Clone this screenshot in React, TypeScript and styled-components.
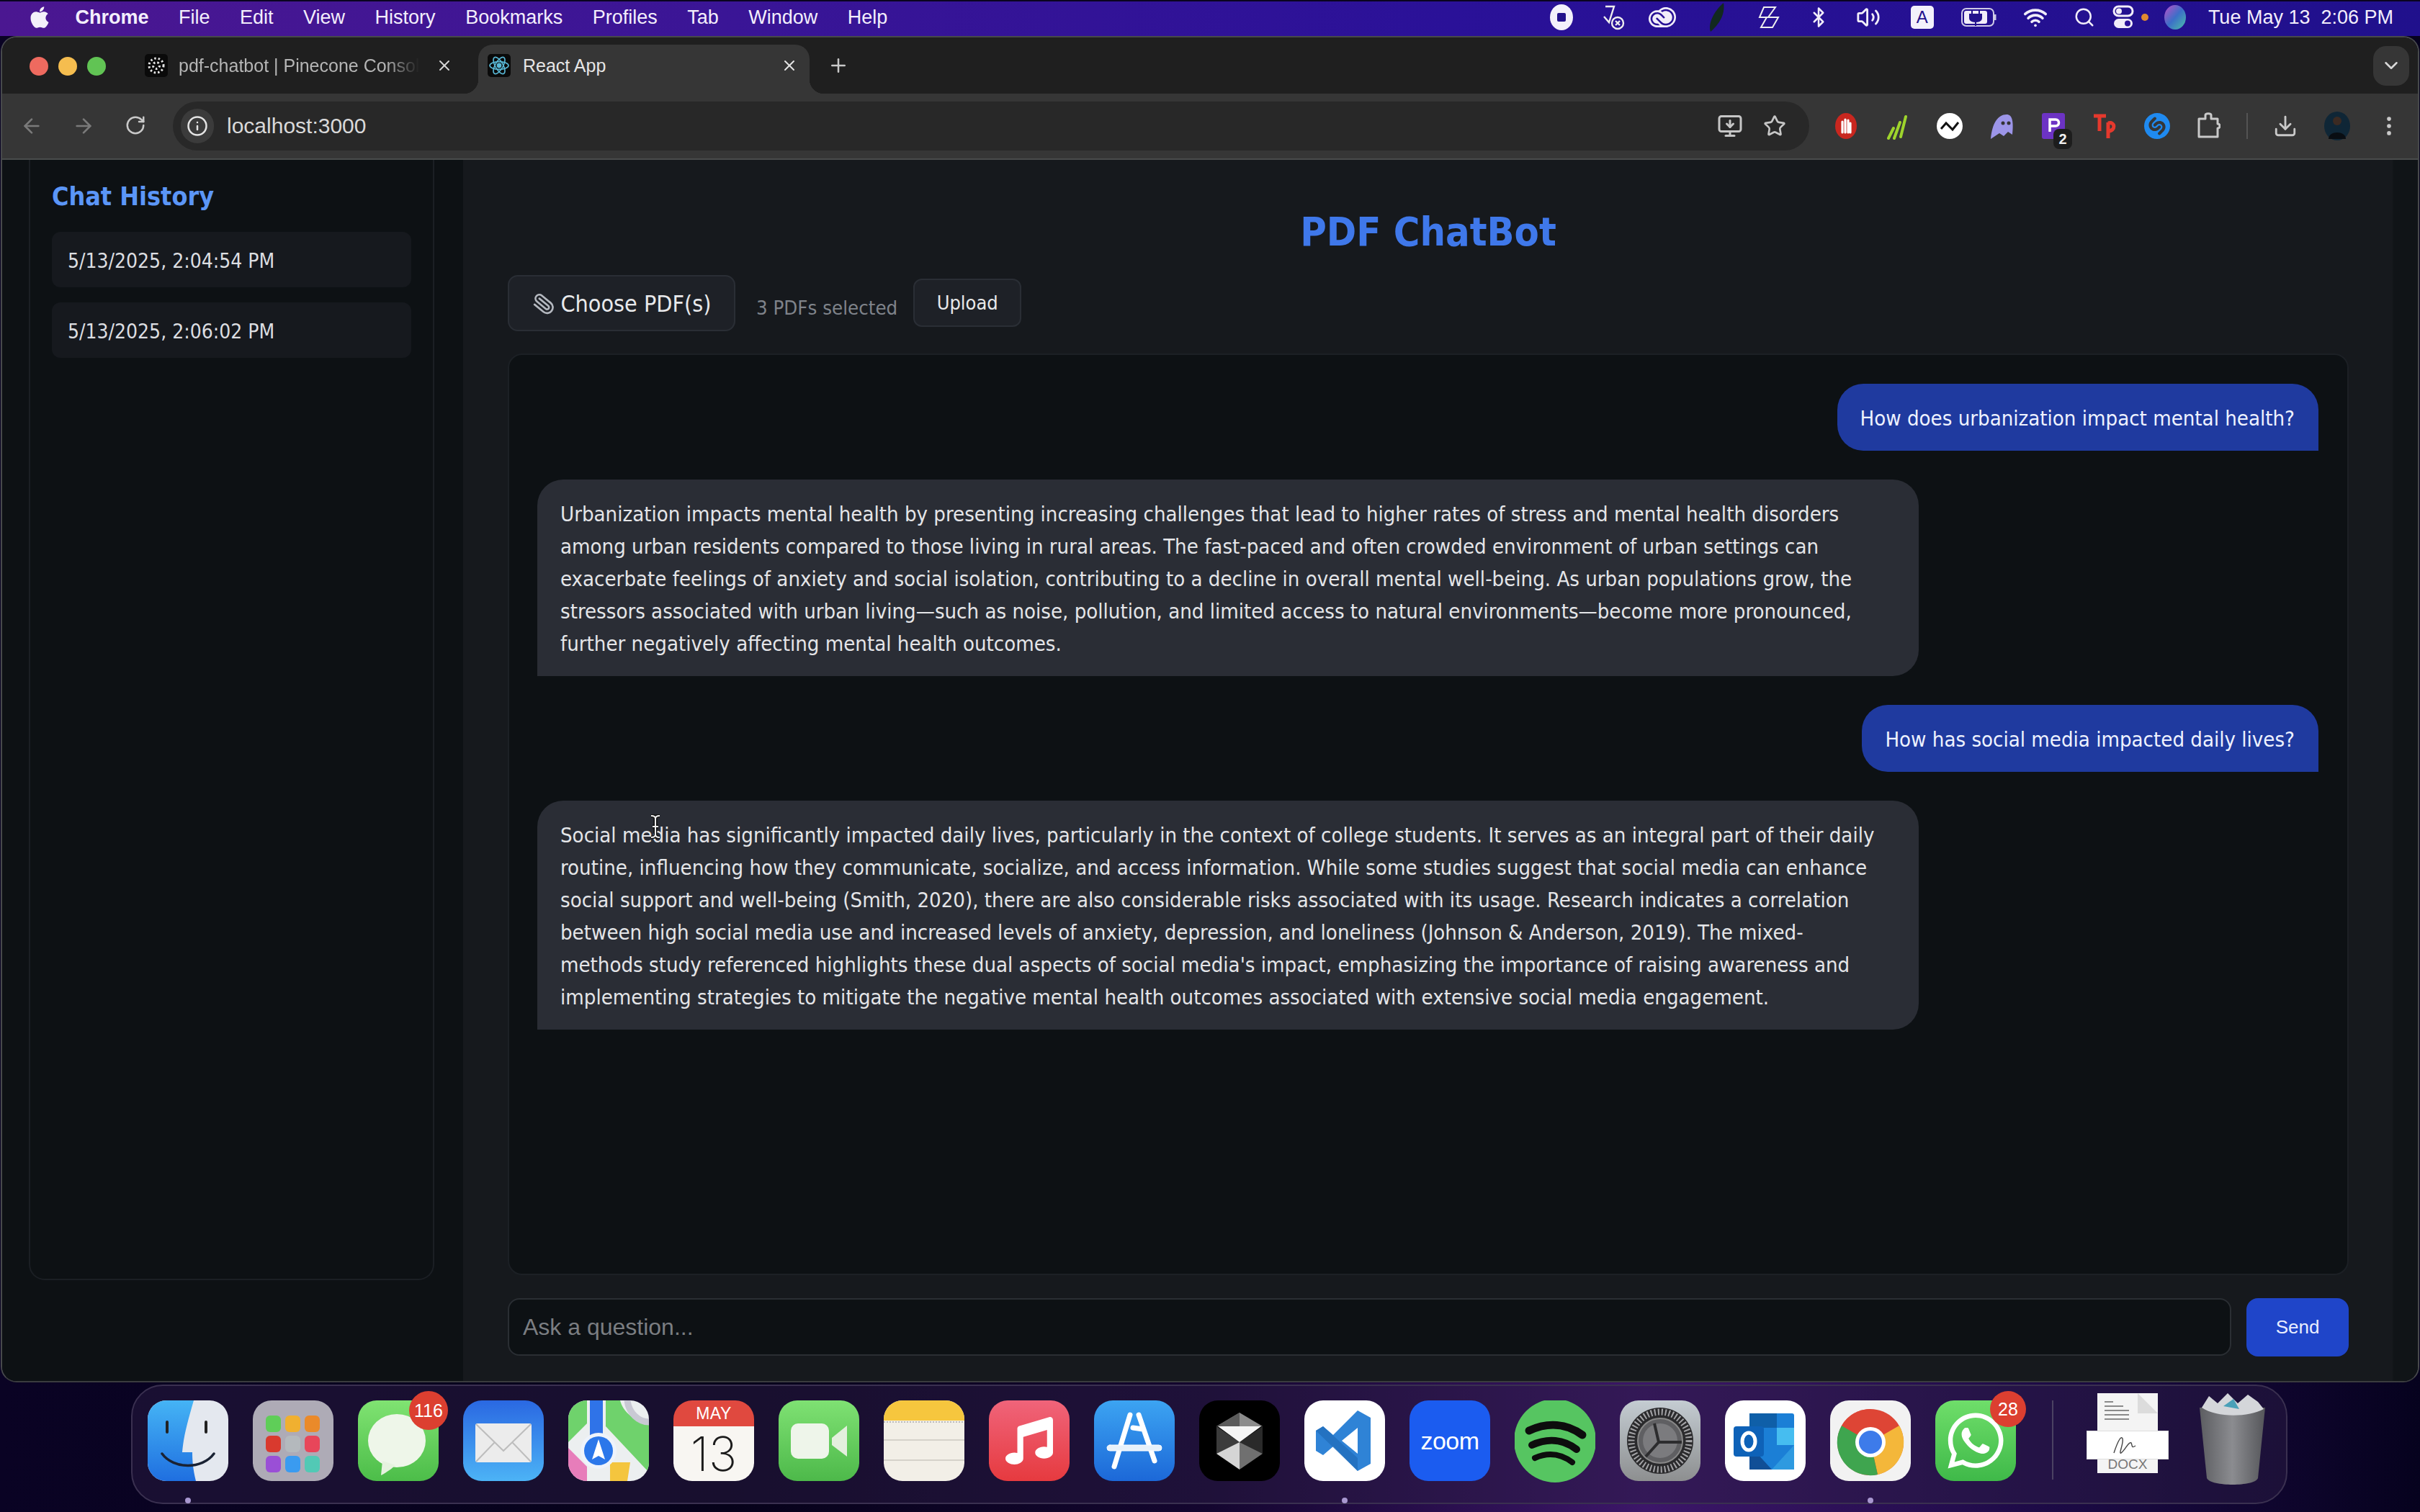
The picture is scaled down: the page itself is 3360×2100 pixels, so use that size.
import React from "react";
import styled, { createGlobalStyle } from "styled-components";
import {
  ArrowLeft, ArrowRight, RotateCw, Info, Star, Download, EllipsisVertical, ChevronDown, X, Plus,
  MonitorDown, Search, Wifi, Bluetooth, Volume2, Paperclip,
} from "lucide-react";
import { FaApple, FaMusic, FaWhatsapp } from "react-icons/fa";
import { SiShazam, SiAdobecreativecloud } from "react-icons/si";

const SANS = `"Liberation Sans", Arial, sans-serif`;
const UI = `"DejaVu Sans", "Liberation Sans", sans-serif`;

const Global = createGlobalStyle`
  html, body { margin: 0; padding: 0; width: 3360px; height: 2100px; overflow: hidden; background: #07021a; }
  #root { width: 3360px; height: 2100px; }
  * { box-sizing: border-box; }
`;

const Desktop = styled.div`
  width: 3360px; height: 2100px; display: flex; flex-direction: column; font-family: ${SANS};
  background: linear-gradient(90deg, #0a0324 0%, #06021a 30%, #14062f 50%, #3c1668 68%, #1c0a45 85%, #06021e 100%);
`;

/* ---------- Menu bar ---------- */
const MenuBar = styled.div`
  height: 50px; flex: none; display: flex; align-items: center; padding: 0 0 4px 40px; color: #f3eefc;
  font-size: 27px; border-top: 2px solid #0a0420;
  background: linear-gradient(90deg, #4b1791 0%, #3a1596 30%, #2a1198 60%, #20108c 100%);
`;
const Menus = styled.div` display: flex; align-items: center; gap: 41.5px; `;
const AppleMark = styled(FaApple)` width: 30px; height: 34px; margin-right: -7px; color: #f4f0fa; `;
const MenuName = styled.span<{ $bold?: boolean }>`
  font-weight: ${(p) => (p.$bold ? 700 : 400)}; white-space: nowrap;
`;
const StatusArea = styled.div`
  margin-left: auto; display: flex; align-items: center; height: 100%; gap: 0; padding-right: 37px;
`;
const StatusSlot = styled.div<{ $w: number; $pull?: number }>`
  width: ${(p) => p.$w}px; flex: none; display: flex; align-items: center; justify-content: center; color: #f1edf9;
  margin-left: ${(p) => p.$pull ?? 0}px;
`;
const ClockText = styled.span` margin-left: 10px; white-space: nowrap; `;
const InputMode = styled.div`
  width: 32px; height: 32px; background: #f3f1fb; color: #23128c; border-radius: 5px; display: flex;
  align-items: center; justify-content: center; font-size: 24px; font-weight: 400;
`;

/* ---------- Browser window ---------- */
const Window = styled.div`
  width: 3358px; height: 1870px; margin-left: 1px; flex: none; display: flex; flex-direction: column;
  border-radius: 22px; overflow: hidden; border: 2px solid #47494b; border-bottom-color: #3a3c3e;
`;
const TabStrip = styled.div`
  height: 78px; flex: none; background: #1f1f1f; display: flex; align-items: flex-end; padding-left: 38px;
`;
const Lights = styled.div` display: flex; gap: 14px; align-self: center; margin-right: 40px; margin-top: 2px; `;
const Light = styled.span<{ $c: string }>`
  width: 26px; height: 26px; border-radius: 50%; background: ${(p) => p.$c};
`;
const Tab = styled.div<{ $active?: boolean }>`
  position: relative; height: 68px; display: flex; align-items: center; width: ${(p) => (p.$active ? 460 : 464)}px;
  margin-right: ${(p) => (p.$active ? 0 : 13)}px; padding: 0 ${(p) => (p.$active ? 16 : 22)}px 10px ${(p) => (p.$active ? 13 : 14)}px; flex: none;
  border-radius: 20px 20px 0 0; background: ${(p) => (p.$active ? "#363636" : "transparent")};
  color: ${(p) => (p.$active ? "#e6e6e6" : "#b5b5b5")}; font-size: 25px;
  ${(p) => p.$active && `
    &::before, &::after { content: ""; position: absolute; bottom: 0; width: 20px; height: 20px; }
    &::before { left: -20px; background: radial-gradient(circle at 0 0, #1f1f1f 20px, #363636 20.5px); }
    &::after { right: -20px; background: radial-gradient(circle at 100% 0, #1f1f1f 20px, #363636 20.5px); }
  `}
`;
const Favicon = styled.div<{ $gap: number }>`
  width: 32px; height: 32px; flex: none; background: #0a0a0a; border-radius: 5px; display: flex;
  align-items: center; justify-content: center; margin-right: ${(p) => p.$gap}px;
`;
const TabTitle = styled.span<{ $fade?: boolean }>`
  flex: 1; min-width: 0; white-space: nowrap; overflow: hidden;
  ${(p) => p.$fade && `margin-right: 23px; mask-image: linear-gradient(90deg, #000 86%, transparent 100%);`}
`;
const NewTab = styled.div`
  align-self: center; margin-left: 22px; width: 36px; display: flex; justify-content: center; color: #c8c8c8;
`;
const TabMenu = styled.div`
  margin-left: auto; margin-right: 12px; align-self: center; width: 50px; height: 55px; border-radius: 18px;
  background: #363636; color: #d8d8d8; display: flex; align-items: center; justify-content: center;
`;
const Toolbar = styled.div`
  height: 92px; flex: none; background: #363636; display: flex; align-items: center; padding-left: 23px;
  border-bottom: 2px solid #4a4c4c;
`;
const NavGroup = styled.div` display: flex; gap: 36px; margin-right: 34px; `;
const NavButton = styled.div<{ $dim?: boolean }>`
  width: 36px; display: flex; justify-content: center; color: ${(p) => (p.$dim ? "#7a7a7a" : "#c9c9c9")};
`;
const UrlPill = styled.div`
  width: 2272px; height: 68px; flex: none; border-radius: 34px; background: #282828; display: flex;
  align-items: center; padding: 0 32px 0 11px;
`;
const InfoChip = styled.div`
  width: 46px; height: 48px; border-radius: 24px; background: #3b3b3b; color: #e4e4e4; display: flex;
  align-items: center; justify-content: center;
`;
const UrlText = styled.span` margin-left: 18px; color: #d9d9d9; font-size: 30px; flex: 1; `;
const PillActions = styled.div` display: flex; gap: 28px; color: #c6c6c6; align-items: center; `;
const ExtList = styled.div` display: flex; align-items: center; gap: 36px; margin-left: 33px; `;
const Ext = styled.div`
  position: relative; width: 36px; height: 40px; display: flex; align-items: center; justify-content: center;
  color: #c9c9c9;
`;
const ExtBadge = styled.span`
  position: absolute; right: -8px; bottom: -12px; width: 26px; height: 28px; border-radius: 8px; background: #1d1d1d;
  color: #f0f0f0; font-size: 20px; font-weight: 700; display: flex; align-items: center; justify-content: center;
`;
const ToolDivider = styled.span` width: 2px; height: 36px; background: #545454; margin: 0 -2px; flex: none; `;

/* ---------- Page ---------- */
const Page = styled.div` flex: 1; min-height: 0; display: flex; position: relative; font-family: ${UI}; font-stretch: condensed; `;
const Sidebar = styled.aside`
  width: 640px; flex: none; background: #0d1114; padding: 0 40px 0 37px; display: flex; flex-direction: column;
`;
const SidebarPanel = styled.div`
  height: 1556px; border: 2px solid #1b1f24; border-top: none; border-radius: 0 0 22px 22px; padding: 24px 30px 0;
  display: flex; flex-direction: column;
`;
const SideTitle = styled.h2`
  margin: 0 0 27px; font-size: 35.6px; line-height: 54px; font-weight: 700; color: #5b96f7; height: 49px;
`;
const HistoryItem = styled.div`
  height: 77px; border-radius: 12px; background: #16191e; color: #dcdee1; font-size: 28px; padding: 3px 22px 0;
  display: flex; align-items: center; margin-bottom: 21px;
`;
const Main = styled.main`
  flex: 1; background: #16191d; display: flex; flex-direction: column; padding: 0 60px 0 62px; min-width: 0;
`;
const Title = styled.h1`
  margin: 0; height: 160px; flex: none; text-align: center; font-size: 55.5px; line-height: 96px; font-weight: 700;
  color: #3f78ea; padding-top: 52px;
`;
const UploadRow = styled.div` height: 78px; flex: none; display: flex; align-items: center; `;
const ChooseButton = styled.label`
  width: 316px; height: 78px; flex: none; border: 2px solid #2a2e35; border-radius: 14px; background: #1e2127;
  display: flex; align-items: center; justify-content: center; gap: 8px; font-size: 32px; color: #e8e9eb; padding-top: 2px;
`;
const ClipIcon = styled(Paperclip)` color: #b4b8bf; transform: scaleX(-1) rotate(6deg); `;
const SelectedText = styled.span`
  margin: 12px 22px 0 29px; color: #7f838a; font-size: 27.4px; white-space: nowrap;
`;
const UploadButton = styled.button`
  width: 150px; height: 67px; flex: none; border: 2px solid #2a2e35; border-radius: 12px; background: #1e2127;
  color: #e8e9eb; font: inherit; font-stretch: condensed; font-size: 27px; margin-top: -1px;
`;
const ChatBox = styled.section`
  flex: 1; min-height: 0; margin-top: 31px; background: #0d1114; border: 2px solid #1c2025; border-radius: 20px;
  padding: 40px 40px 39px 39px; display: flex; flex-direction: column; gap: 40px;
`;
const Bubble = styled.div<{ $user?: boolean }>`
  flex: none; font-size: 29.1px; line-height: 45px; padding: ${(p) => (p.$user ? "26px 33px 22px 32px" : "26px 32px 22px")};
  align-self: ${(p) => (p.$user ? "flex-end" : "flex-start")}; width: ${(p) => (p.$user ? "auto" : "1918px")};
  border-radius: ${(p) => (p.$user ? "36px 36px 0 36px" : "36px 36px 36px 0")};
  background: ${(p) => (p.$user ? "#1f3a9f" : "#2a2d35")}; color: ${(p) => (p.$user ? "#eef2ff" : "#e4e5e8")};
`;
const Line = styled.div` white-space: nowrap; `;
const InputRow = styled.form` height: 81px; flex: none; margin: 32px 0 34px; display: flex; gap: 21px; `;
const QuestionInput = styled.input`
  flex: 1; min-width: 0; height: 80px; background: #0d1114; border: 2px solid #2a2e33; border-radius: 16px;
  padding: 0 19px; font-family: ${SANS}; font-size: 32px; color: #ddd; outline: none;
  &::placeholder { color: #7b7e82; opacity: 1; }
`;
const SendButton = styled.button`
  width: 142px; height: 81px; flex: none; border: none; border-radius: 16px; background: #1f45c9; color: #e9eeff;
  font-family: ${SANS}; font-size: 26px;
`;
const ScrollStrip = styled.div` width: 36px; flex: none; background: #101417; border-left: 2px solid #14181b; `;
const TextCursor = styled.svg` position: absolute; left: 895px; top: 909px; `;

/* ---------- Dock ---------- */
const Dock = styled.div`
  width: 2994px; height: 166px; flex: none; margin: 3px 0 0 182px; display: flex; align-items: flex-start;
  padding: 20px 0 0 21px; gap: 34px; border: 2px solid #3a3050; border-radius: 44px;
  background: rgba(44, 30, 70, 0.48);
`;
const DockItem = styled.div` position: relative; width: 112px; height: 112px; flex: none; `;
const IconShape = styled.div<{ $bg: string }>`
  width: 112px; height: 112px; border-radius: 26px; overflow: hidden; background: ${(p) => p.$bg};
  display: flex; align-items: center; justify-content: center;
  svg { display: block; }
`;
const Badge = styled.span<{ $d: number; $l: number }>`
  position: absolute; left: ${(p) => p.$l}px; top: -13px; width: ${(p) => p.$d}px; height: ${(p) => p.$d}px;
  border-radius: 50%; background: #dc3f30; color: #fff; font-size: 25px; display: flex; align-items: center;
  justify-content: center;
`;
const RunDot = styled.span`
  position: absolute; left: 50%; margin-left: -4px; bottom: -31px; width: 8px; height: 8px; border-radius: 50%;
  background: #a897d0;
`;
const CalHead = styled.div`
  height: 36px; background: #e0493f; color: #fff; font-size: 23px; display: flex; align-items: center;
  justify-content: center; letter-spacing: 0.5px; border-radius: 26px 26px 0 0;
`;
const CalDay = styled.div`
  height: 76px; color: #1c1c1c; background: #f8f6f2; font-family: Inter, ${SANS}; font-size: 66px; font-weight: 200;
  line-height: 76px; text-align: center; border-radius: 0 0 26px 26px;
`;
const ZoomWord = styled.span` color: #fff; font-family: ${SANS}; font-size: 34px; font-weight: 400; letter-spacing: -0.5px; `;
const DockDivider = styled.span` width: 2px; height: 110px; background: #4b4262; margin: 0 12px 0 16px; flex: none; `;
const DocFile = styled.div` position: relative; width: 114px; height: 111px; margin-top: -10px; flex: none; display: flex; justify-content: center; `;
const DocPage = styled.div`
  width: 84px; height: 111px; background: #f4f4f4; display: flex; flex-direction: column; align-items: center;
  color: #777; font-size: 19px; line-height: 24px; justify-content: space-between;
`;
const DocCard = styled.div`
  position: absolute; left: 0; top: 52px; width: 114px; height: 40px; background: #fff; border: 1px solid #ddd;
  display: flex; align-items: center; justify-content: center;
`;
const Trash = styled.div` width: 97px; height: 127px; margin: -10px 0 0 6px; flex: none; `;

function MenuGlyph({ children, w, pull }: { children: React.ReactNode; w: number; pull?: number }) {
  return <StatusSlot $w={w} $pull={pull}>{children}</StatusSlot>;
}

function ReactLogo() {
  return (
    <svg width="30" height="30" viewBox="0 0 30 30" fill="none" stroke="#59b8d6" strokeWidth="1.6">
      <circle cx="15" cy="15" r="2.6" fill="#59b8d6" />
      <ellipse cx="15" cy="15" rx="13" ry="5.4" />
      <ellipse cx="15" cy="15" rx="13" ry="5.4" transform="rotate(60 15 15)" />
      <ellipse cx="15" cy="15" rx="13" ry="5.4" transform="rotate(120 15 15)" />
    </svg>
  );
}
function PineLogo() {
  return (
    <svg width="26" height="26" viewBox="0 0 26 26" fill="none" stroke="#e5e5e5" strokeWidth="3" strokeDasharray="2.5 3">
      <circle cx="13" cy="13" r="10" />
      <circle cx="13" cy="13" r="4.5" />
    </svg>
  );
}

const launchColors = ["#5fce58", "#f0b030", "#ea8a2a", "#d93a2e", "#b4b9bd", "#e8465a", "#9a4fd6", "#3a9bf0", "#52c9b5"];

function Icons() {
  return (
    <>
      <DockItem>
        <IconShape $bg="#e4e8ef">
          <svg width="112" height="112" viewBox="0 0 112 112">
            <defs><linearGradient id="fd" x1="0" y1="0" x2="0" y2="1"><stop offset="0" stopColor="#45b4f5" /><stop offset="1" stopColor="#1f6fe0" /></linearGradient></defs>
            <path d="M0 0H64C56 28 50 48 48 72H62C62 88 64 100 67 112H0Z" fill="url(#fd)" />
            <path d="M27 30V44M81 30V44" stroke="#222" strokeWidth="4" strokeLinecap="round" />
            <path d="M20 74C36 96 76 96 92 74" fill="none" stroke="#1a2233" strokeWidth="3.5" strokeLinecap="round" />
          </svg>
        </IconShape>
        <RunDot />
      </DockItem>
      <DockItem>
        <IconShape $bg="#aeabb6">
          <svg width="112" height="112" viewBox="0 0 112 112">
            {launchColors.map((c, i) => (
              <rect key={c} x={18 + (i % 3) * 27} y={21 + Math.floor(i / 3) * 28} width="21" height="23" rx="6" fill={c} />
            ))}
          </svg>
        </IconShape>
      </DockItem>
      <DockItem>
        <IconShape $bg="linear-gradient(#80e372,#4cbd49)">
          <svg width="112" height="112" viewBox="0 0 112 112">
            <ellipse cx="54" cy="56" rx="40" ry="37" fill="#eef6e9" />
            <path d="M34 84L32 104C40 100 48 94 52 90Z" fill="#e6f2df" />
          </svg>
        </IconShape>
        <Badge $d={54} $l={71}>116</Badge>
      </DockItem>
      <DockItem>
        <IconShape $bg="linear-gradient(#2a68e2,#4cb3f6)">
          <svg width="112" height="112" viewBox="0 0 112 112">
            <rect x="17" y="32" width="78" height="54" rx="3" fill="#ececec" />
            <path d="M18 33L56 70L94 33M18 85L44 58M94 85L68 58" fill="none" stroke="#bdbdbd" strokeWidth="2" />
          </svg>
        </IconShape>
      </DockItem>
      <DockItem>
        <IconShape $bg="#eceff0">
          <svg width="112" height="112" viewBox="0 0 112 112">
            <path d="M0 0H26V32L0 58ZM52 36L112 100V30C92 30 76 16 72 0H52Z" fill="#6fd26c" />
            <path d="M0 66L26 92V112H0Z" fill="#e77dba" />
            <path d="M58 86H86L82 112H58Z" fill="#f4c53e" />
            <rect x="30" y="0" width="18" height="50" fill="#2f73e8" />
            <path d="M82 0C84 18 98 30 112 30" fill="none" stroke="#c9c9d4" strokeWidth="9" />
            <circle cx="42" cy="70" r="25" fill="#eef3fb" />
            <circle cx="42" cy="70" r="20" fill="#2b77ea" />
            <path d="M42 54L51 82L42 77L33 82Z" fill="#fff" />
          </svg>
        </IconShape>
      </DockItem>
      <DockItem>
        <CalHead>MAY</CalHead>
        <CalDay>13</CalDay>
      </DockItem>
      <DockItem>
        <IconShape $bg="linear-gradient(#7fe173,#4db94a)">
          <svg width="112" height="112" viewBox="0 0 112 112">
            <rect x="17" y="32" width="53" height="49" rx="10" fill="#eef5ea" />
            <path d="M74 52L95 35V78L74 62Z" fill="#e3efdd" />
          </svg>
        </IconShape>
      </DockItem>
      <DockItem>
        <IconShape $bg="#f2efe7">
          <svg width="112" height="112" viewBox="0 0 112 112">
            <rect width="112" height="28" fill="#f6c63e" />
            <path d="M0 30H112" stroke="#bbb" strokeWidth="2" strokeDasharray="2 2" />
            <path d="M0 55H112M0 83H112" stroke="#d5d2ca" strokeWidth="2" />
          </svg>
        </IconShape>
      </DockItem>
      <DockItem>
        <IconShape $bg="linear-gradient(#f0647a,#e63a3f)"><FaMusic size={66} color="#fff" /></IconShape>
      </DockItem>
      <DockItem>
        <IconShape $bg="linear-gradient(#3ca4f2,#1c68d8)">
          <svg width="112" height="112" viewBox="0 0 112 112" stroke="#fff" strokeLinecap="round" fill="none">
            <path d="M50 20L28 92M62 20L84 84M54 38L68 40" strokeWidth="7" />
            <rect x="18" y="62" width="76" height="8" rx="4" fill="#e7f1fb" strokeWidth="1" />
          </svg>
        </IconShape>
      </DockItem>
      <DockItem>
        <IconShape $bg="#000">
          <svg width="112" height="112" viewBox="0 0 112 112">
            <path d="M56 17L24 36H88Z" fill="#8c8c8c" />
            <path d="M56 17L24 36H56Z" fill="#5b5b5b" />
            <path d="M24 36L56 58L24 74Z" fill="#3b3b3b" />
            <path d="M88 36L56 58L88 74Z" fill="#2a2a2a" />
            <path d="M26 36H86L56 58Z" fill="#f5f5f5" />
            <path d="M56 58L24 74L56 96Z" fill="#d5d5d5" />
            <path d="M56 58L88 74L56 96Z" fill="#707070" />
          </svg>
        </IconShape>
      </DockItem>
      <DockItem>
        <IconShape $bg="#fff">
          <svg width="112" height="112" viewBox="0 0 112 112">
            <path d="M74 14L92 24V88L74 98L40 64L26 76L16 70V42L26 36L40 48Z" fill="#2f83d6" />
            <path d="M74 38L52 56L74 74Z" fill="#fff" />
            <path d="M16 42L26 36L74 80V98Z" fill="#1f6bb8" opacity="0.7" />
          </svg>
        </IconShape>
        <RunDot />
      </DockItem>
      <DockItem>
        <IconShape $bg="#1b5cf0"><ZoomWord>zoom</ZoomWord></IconShape>
      </DockItem>
      <DockItem>
        <svg width="112" height="116" viewBox="0 0 112 116">
          <ellipse cx="56" cy="56" rx="57" ry="58" fill="#56c561" />
          <path d="M20 42C46 30 72 32 94 48" fill="none" stroke="#0d0d0d" strokeWidth="11" strokeLinecap="round" />
          <path d="M24 62C46 52 68 54 86 68" fill="none" stroke="#0d0d0d" strokeWidth="10" strokeLinecap="round" />
          <path d="M28 80C46 72 64 74 80 86" fill="none" stroke="#0d0d0d" strokeWidth="8" strokeLinecap="round" />
        </svg>
      </DockItem>
      <DockItem>
        <IconShape $bg="linear-gradient(#c4ccd2,#8d8f90)">
          <svg width="112" height="112" viewBox="0 0 112 112" fill="none">
            <circle cx="56" cy="56" r="46" fill="#2a2a2c" />
            <circle cx="56" cy="56" r="40" stroke="#a3a3a6" strokeWidth="9" strokeDasharray="2 3" />
            <circle cx="56" cy="56" r="31" fill="#5f5f62" stroke="#888" strokeWidth="2" />
            <circle cx="56" cy="56" r="24" fill="#7b7b7e" />
            <path d="M48 32L54 58L36 78M54 58H86" stroke="#2c2c2e" strokeWidth="4" />
          </svg>
        </IconShape>
      </DockItem>
      <DockItem>
        <IconShape $bg="#fff">
          <svg width="112" height="112" viewBox="0 0 112 112">
            <rect x="34" y="18" width="62" height="78" rx="3" fill="#1b7fd6" />
            <rect x="34" y="18" width="38" height="20" fill="#0f5fa8" />
            <rect x="72" y="38" width="24" height="24" fill="#46bdf0" />
            <path d="M34 62L65 96H34Z" fill="#114f96" />
            <path d="M96 62V96H65Z" fill="#2e9ae0" />
            <rect x="12" y="36" width="42" height="42" rx="4" fill="#0e62b8" />
            <ellipse cx="33" cy="57" rx="9" ry="12" fill="none" stroke="#fff" strokeWidth="5" />
          </svg>
        </IconShape>
      </DockItem>
      <DockItem>
        <IconShape $bg="#f2f2f2">
          <svg width="112" height="112" viewBox="0 0 112 112">
            <circle cx="56" cy="58" r="46" fill="#de4535" />
            <path d="M56 58L96 35A46 46 0 0 1 66 103Z" fill="#f4b73a" />
            <path d="M56 58L66 103A46 46 0 0 1 16 35Z" fill="#3fa54f" />
            <path d="M56 58L16 35A46 46 0 0 1 56 12Z" fill="#de4535" />
            <circle cx="56" cy="58" r="21" fill="#fff" />
            <circle cx="56" cy="58" r="16" fill="#3d7bea" />
          </svg>
        </IconShape>
        <RunDot />
      </DockItem>
      <DockItem>
        <IconShape $bg="linear-gradient(#6fde6a,#3fb949)"><FaWhatsapp size={88} color="#fff" /></IconShape>
        <Badge $d={50} $l={76}>28</Badge>
      </DockItem>
    </>
  );
}

const answer1 = [
  "Urbanization impacts mental health by presenting increasing challenges that lead to higher rates of stress and mental health disorders",
  "among urban residents compared to those living in rural areas. The fast-paced and often crowded environment of urban settings can",
  "exacerbate feelings of anxiety and social isolation, contributing to a decline in overall mental well-being. As urban populations grow, the",
  "stressors associated with urban living—such as noise, pollution, and limited access to natural environments—become more pronounced,",
  "further negatively affecting mental health outcomes.",
];
const answer2 = [
  "Social media has significantly impacted daily lives, particularly in the context of college students. It serves as an integral part of their daily",
  "routine, influencing how they communicate, socialize, and access information. While some studies suggest that social media can enhance",
  "social support and well-being (Smith, 2020), there are also considerable risks associated with its usage. Research indicates a correlation",
  "between high social media use and increased levels of anxiety, depression, and loneliness (Johnson & Anderson, 2019). The mixed-",
  "methods study referenced highlights these dual aspects of social media's impact, emphasizing the importance of raising awareness and",
  "implementing strategies to mitigate the negative mental health outcomes associated with extensive social media engagement.",
];

export default function App() {
  return (
    <Desktop>
      <Global />
      <MenuBar>
        <Menus>
          <AppleMark />
          <MenuName $bold>Chrome</MenuName>
          {["File", "Edit", "View", "History", "Bookmarks", "Profiles", "Tab", "Window", "Help"].map((m) => (
            <MenuName key={m}>{m}</MenuName>
          ))}
        </Menus>
        <StatusArea>
          <MenuGlyph w={72}>
            <svg width="34" height="40" viewBox="0 0 34 40"><ellipse cx="17" cy="20" rx="16" ry="18" fill="#f3f1fb" /><rect x="11" y="14" width="12" height="12" rx="2" fill="#23128c" /></svg>
          </MenuGlyph>
          <MenuGlyph w={70}>
            <svg width="36" height="38" viewBox="0 0 36 38" fill="none" stroke="#eee" strokeWidth="2.4"><path d="M6 18L13 26L20 4L8 4" /><circle cx="25" cy="27" r="8" /><path d="M22 24L28 30M28 24L22 30" /></svg>
          </MenuGlyph>
          <MenuGlyph w={68}><SiAdobecreativecloud size={38} /></MenuGlyph>
          <MenuGlyph w={84}>
            <svg width="30" height="40" viewBox="0 0 30 40"><path d="M24 0C26 12 22 26 6 40C2 30 10 12 24 0Z" fill="#12291f" /></svg>
          </MenuGlyph>
          <MenuGlyph w={60}>
            <svg width="34" height="36" viewBox="0 0 34 36" fill="none" stroke="#eee" strokeWidth="2"><path d="M10 4H26L16 18H30L22 32H6L14 18H4Z" /></svg>
          </MenuGlyph>
          <MenuGlyph w={78}><Bluetooth size={30} /></MenuGlyph>
          <MenuGlyph w={60}><Volume2 size={34} /></MenuGlyph>
          <MenuGlyph w={90}><InputMode>A</InputMode></MenuGlyph>
          <MenuGlyph w={68}>
            <svg width="50" height="26" viewBox="0 0 50 26"><rect x="1" y="1" width="44" height="24" rx="6" fill="none" stroke="#cfcbe6" strokeWidth="2" /><rect x="4" y="4" width="32" height="18" rx="3" fill="#f1edf9" /><path d="M47 9V17" stroke="#cfcbe6" strokeWidth="3" /><path d="M15 3V9M25 3V9M12 9H28V14C28 18 23 19 20 19C17 19 12 18 12 14ZM20 19V25" fill="#23128c" stroke="#23128c" strokeWidth="2" /></svg>
          </MenuGlyph>
          <MenuGlyph w={88}><Wifi size={34} strokeWidth={2.6} /></MenuGlyph>
          <MenuGlyph w={48}><Search size={30} /></MenuGlyph>
          <MenuGlyph w={60}>
            <svg width="30" height="34" viewBox="0 0 30 34" fill="none"><rect x="2" y="2" width="26" height="13" rx="6.5" stroke="#f1edf9" strokeWidth="3" /><circle cx="9" cy="8.5" r="4" fill="#f1edf9" /><rect x="2" y="19" width="26" height="13" rx="6.5" fill="#f1edf9" /><circle cx="21" cy="25.5" r="4" fill="#2a1198" /></svg>
          </MenuGlyph>
          <MenuGlyph w={12} pull={-6}>
            <svg width="10" height="10" viewBox="0 0 10 10"><circle cx="5" cy="5" r="5" fill="#e08a30" /></svg>
          </MenuGlyph>
          <MenuGlyph w={72}>
            <svg width="30" height="34" viewBox="0 0 30 34"><defs><linearGradient id="sr" x1="0" y1="0" x2="1" y2="1"><stop offset="0" stopColor="#c04fc8" /><stop offset="0.5" stopColor="#3c6fc8" /><stop offset="1" stopColor="#4cc0a8" /></linearGradient></defs><ellipse cx="15" cy="17" rx="15" ry="17" fill="url(#sr)" /></svg>
          </MenuGlyph>
          <ClockText>Tue May 13&nbsp; 2:06 PM</ClockText>
        </StatusArea>
      </MenuBar>

      <Window>
        <TabStrip>
          <Lights>
            <Light $c="#ee6a5f" /><Light $c="#f5bd4f" /><Light $c="#61c454" />
          </Lights>
          <Tab>
            <Favicon $gap={15}><PineLogo /></Favicon>
            <TabTitle $fade>pdf-chatbot | Pinecone Console</TabTitle>
            <X size={24} color="#d6d6d6" />
          </Tab>
          <Tab $active>
            <Favicon $gap={17}><ReactLogo /></Favicon>
            <TabTitle>React App</TabTitle>
            <X size={24} color="#e6e6e6" />
          </Tab>
          <NewTab><Plus size={30} /></NewTab>
          <TabMenu><ChevronDown size={30} /></TabMenu>
        </TabStrip>
        <Toolbar>
          <NavGroup>
            <NavButton $dim><ArrowLeft size={32} /></NavButton>
            <NavButton $dim><ArrowRight size={32} /></NavButton>
            <NavButton><RotateCw size={30} /></NavButton>
          </NavGroup>
          <UrlPill>
            <InfoChip><Info size={30} /></InfoChip>
            <UrlText>localhost:3000</UrlText>
            <PillActions>
              <MonitorDown size={36} />
              <Star size={32} />
            </PillActions>
          </UrlPill>
          <ExtList>
            <Ext>
              <svg width="30" height="36" viewBox="0 0 30 36"><ellipse cx="15" cy="18" rx="15" ry="18" fill="#c9271f" /><path d="M10 27V12M14 27V9M18 27V10M21 27V14" stroke="#fff" strokeWidth="3.2" strokeLinecap="round" /></svg>
            </Ext>
            <Ext>
              <svg width="32" height="38" viewBox="0 0 32 38" fill="none" stroke="#9ed42c" strokeWidth="4" strokeLinecap="round"><path d="M3 36L10 22M11 36L19 14M20 34L27 6" /></svg>
            </Ext>
            <Ext>
              <svg width="36" height="36" viewBox="0 0 36 36"><circle cx="18" cy="18" r="18" fill="#fff" /><path d="M6 22L13 14L22 23L30 13" fill="none" stroke="#111" strokeWidth="3" /></svg>
            </Ext>
            <Ext>
              <svg width="34" height="36" viewBox="0 0 34 36"><path d="M2 36C4 14 12 2 24 2C32 2 34 12 32 30L26 26L20 32L14 28Z" fill="#9c95e8" /><circle cx="19" cy="14" r="2.5" fill="#333" /><circle cx="27" cy="14" r="2.5" fill="#333" /></svg>
            </Ext>
            <Ext>
              <svg width="32" height="36" viewBox="0 0 32 36"><rect width="32" height="36" rx="3" fill="#6c33c4" /><path d="M11 26V9H19C25 9 25 18 19 18H11" fill="none" stroke="#fff" strokeWidth="3.5" /></svg>
              <ExtBadge>2</ExtBadge>
            </Ext>
            <Ext>
              <svg width="32" height="38" viewBox="0 0 32 38" fill="none" stroke="#e5392d" strokeWidth="5"><path d="M0 5H17M8 5V26" /><path d="M20 36V14" /><path d="M20 15C30 12 31 26 20 26" /></svg>
            </Ext>
            <Ext><SiShazam size={36} color="#1f8af0" /></Ext>
            <Ext>
              <svg width="32" height="38" viewBox="0 0 32 38" fill="none" stroke="#c9c9c9" strokeWidth="3"><path d="M2 9H11V4C11 1 19 1 19 4V9H28V16C32 16 32 22 28 22V34H2Z" strokeLinejoin="round" /></svg>
            </Ext>
            <ToolDivider />
            <Ext><Download size={34} /></Ext>
            <Ext>
              <svg width="36" height="40" viewBox="0 0 36 40"><ellipse cx="18" cy="20" rx="18" ry="20" fill="#0f2636" /><circle cx="18" cy="13" r="6" fill="#3b2a22" /><path d="M6 38C6 26 30 26 30 38Z" fill="#090d12" /></svg>
            </Ext>
            <Ext><EllipsisVertical size={34} /></Ext>
          </ExtList>
        </Toolbar>
        <Page>
          <Sidebar>
            <SidebarPanel>
              <SideTitle>Chat History</SideTitle>
              <HistoryItem>5/13/2025, 2:04:54 PM</HistoryItem>
              <HistoryItem>5/13/2025, 2:06:02 PM</HistoryItem>
            </SidebarPanel>
          </Sidebar>
          <Main>
            <Title>PDF ChatBot</Title>
            <UploadRow>
              <ChooseButton><ClipIcon size={32} />Choose PDF(s)</ChooseButton>
              <SelectedText>3 PDFs selected</SelectedText>
              <UploadButton type="button">Upload</UploadButton>
            </UploadRow>
            <ChatBox>
              <Bubble $user>How does urbanization impact mental health?</Bubble>
              <Bubble>{answer1.map((l) => <Line key={l}>{l}</Line>)}</Bubble>
              <Bubble $user>How has social media impacted daily lives?</Bubble>
              <Bubble>{answer2.map((l) => <Line key={l}>{l}</Line>)}</Bubble>
            </ChatBox>
            <InputRow>
              <QuestionInput placeholder="Ask a question..." />
              <SendButton type="button">Send</SendButton>
            </InputRow>
          </Main>
          <ScrollStrip />
          <TextCursor width="24" height="34" viewBox="0 0 24 34" fill="none">
            <path d="M6 2C9 2 12 3 12 6V28C12 31 9 32 6 32M18 2C15 2 12 3 12 6V28C12 31 15 32 18 32M8 17H16" stroke="#111" strokeWidth="5" />
            <path d="M6 2C9 2 12 3 12 6V28C12 31 9 32 6 32M18 2C15 2 12 3 12 6V28C12 31 15 32 18 32M8 17H16" stroke="#eee" strokeWidth="2" />
          </TextCursor>
        </Page>
      </Window>

      <Dock>
        <Icons />
        <DockDivider />
        <DocFile>
          <DocPage>
            <svg width="84" height="48" viewBox="0 0 84 48" fill="none">
              <path d="M56 0L84 28H56Z" fill="#dcdcdc" />
              <path d="M10 12H22M10 18H36M10 24H44M10 30H44M10 36H44" stroke="#8a8a8a" strokeWidth="2" />
            </svg>
            DOCX
          </DocPage>
          <DocCard>
            <svg width="50" height="34" viewBox="0 0 50 34" fill="none" stroke="#444" strokeWidth="1.4"><path d="M6 28C12 10 16 4 18 8C20 14 12 30 16 28C22 24 26 12 30 14C32 18 30 22 36 18" /></svg>
          </DocCard>
        </DocFile>
        <Trash>
          <svg width="97" height="127" viewBox="0 0 97 127">
            <defs><linearGradient id="tr" x1="0" x2="1"><stop offset="0" stopColor="#5c5d61" /><stop offset="0.5" stopColor="#8b8c90" /><stop offset="1" stopColor="#55565a" /></linearGradient></defs>
            <path d="M3 20H94L84 118C80 130 18 130 13 118Z" fill="url(#tr)" />
            <path d="M6 20L16 4L28 14L42 0L56 14L70 2L84 12L92 22C70 34 26 34 6 20Z" fill="#d4d6da" />
            <path d="M36 18L50 8L58 22Z" fill="#4aa0b8" />
          </svg>
        </Trash>
      </Dock>
    </Desktop>
  );
}
